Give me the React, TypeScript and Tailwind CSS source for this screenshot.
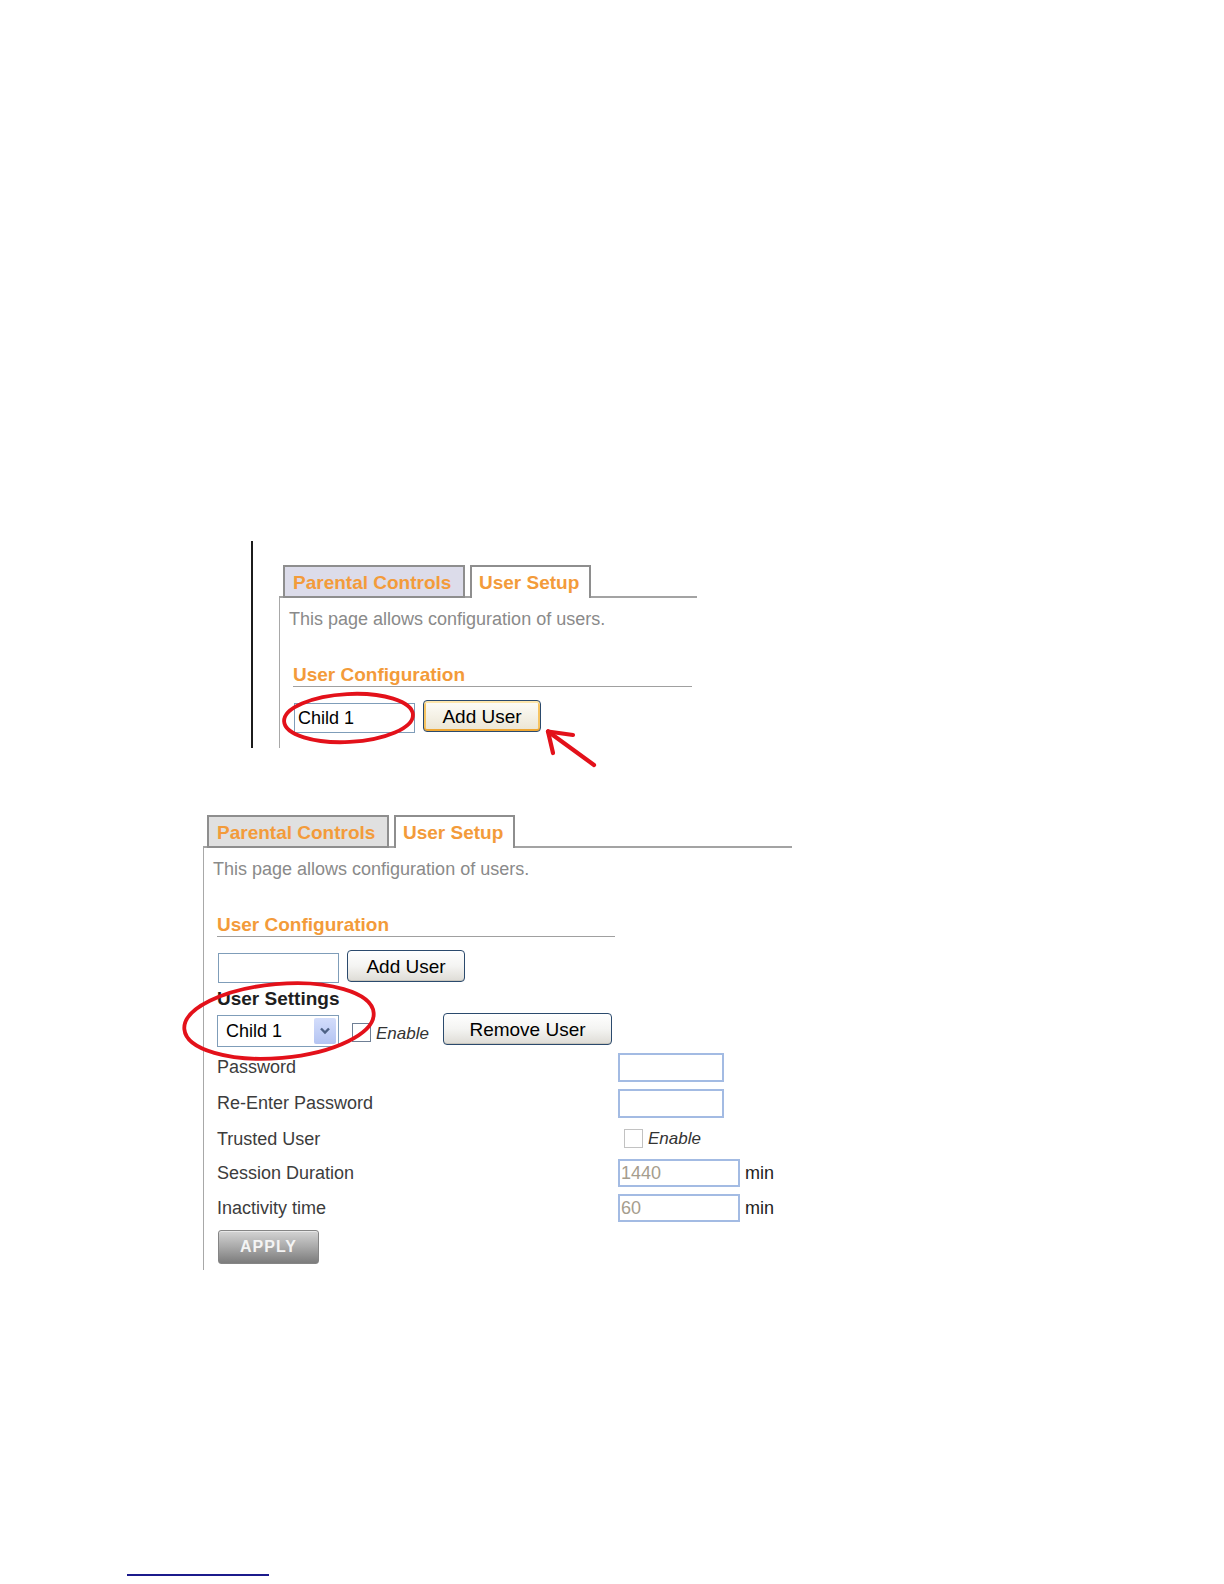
import React from "react";

// Manual page: two router screenshots (Parental Controls > User Setup) with red annotations

const ORANGE = "text-[#f39b3a]";

function TabBar({ widthClass, inactiveClass }: { widthClass: string; inactiveClass: string }) {
  return (
    <div className={`flex items-end ${widthClass}`}>
      <div className="w-[4px] border-b-2 border-[#a3a3a3]" />
      <div
        className={`w-[182px] h-[33px] border-2 border-[#8e8e8e] ${inactiveClass} pl-[8px] pt-[5px] text-[19px] font-bold leading-[22px] ${ORANGE} whitespace-nowrap`}
      >
        Parental Controls
      </div>
      <div className="w-[5px] border-b-2 border-[#a3a3a3]" />
      <div
        className={`w-[121px] h-[33px] border-2 border-b-0 border-[#8e8e8e] bg-white pl-[7px] pt-[5px] text-[19px] font-bold leading-[22px] ${ORANGE} whitespace-nowrap`}
      >
        User Setup
      </div>
      <div className="flex-1 border-b-2 border-[#a3a3a3]" />
    </div>
  );
}

function XpButton({ label, widthClass, hover }: { label: string; widthClass: string; hover?: boolean }) {
  return (
    <button
      className={`${widthClass} h-[32px] rounded-[4px] border border-[#2b4a6d] text-[19px] leading-none text-black ${
        hover
          ? "bg-gradient-to-b from-[#fefdf8] to-[#ebe5d3] shadow-[inset_0_2px_0_#fde6ac,inset_0_-2px_0_#eea733,inset_2px_0_0_#f6c462,inset_-2px_0_0_#f6c462]"
          : "bg-gradient-to-b from-[#ffffff] via-[#f4f4f2] to-[#dedcd6] shadow-[inset_0_-1px_0_#c9c6bd]"
      }`}
    >
      {label}
    </button>
  );
}

function Row({ label, children, h }: { label: string; children: React.ReactNode; h: string }) {
  return (
    <div className={`flex items-center ${h}`}>
      <div className="w-[401px] text-[18px] leading-[22px] text-[#3c3c3c]">{label}</div>
      {children}
    </div>
  );
}

export default function App() {
  return (
    <div className="relative w-[1224px] h-[1584px] overflow-hidden bg-white font-['Liberation_Sans',Arial,sans-serif]">
      {/* figure 1 */}
      <div className="flex items-start pt-[541px] pl-[251px]">
        <div className="w-[2px] h-[207px] bg-[#1c1c1c]" />
        <div className="ml-[26px] mt-[24px]">
          <TabBar widthClass="w-[418px]" inactiveClass="bg-[#dcdcea]" />
          <div className="border-l border-[#a8a8a8] pl-[9px] pt-[10px] pb-[15px]">
            <p className="text-[18px] leading-[22px] text-[#8a8a8a]">This page allows configuration of users.</p>
            <div className={`mt-[34px] ml-[4px] w-[399px] border-b border-[#a0a0a0] text-[19px] font-bold leading-[22px] ${ORANGE}`}>
              User Configuration
            </div>
            <div className="mt-[13px] ml-[5px] flex items-end gap-[8px]">
              <div className="w-[121px] h-[30px] border border-[#7f9db9] bg-white pl-[3px] text-[18px] leading-[28px] text-black">
                Child 1
              </div>
              <div className="mb-[1px]">
                <XpButton label="Add User" widthClass="w-[118px]" hover />
              </div>
            </div>
          </div>
        </div>
      </div>

      {/* figure 2 */}
      <div className="mt-[67px] pl-[203px]">
        <TabBar widthClass="w-[589px]" inactiveClass="bg-[#e0e0e0]" />
        <div className="border-l border-[#a8a8a8] pl-[9px] pt-[10px] pb-[6px]">
          <p className="text-[18px] leading-[22px] text-[#8a8a8a]">This page allows configuration of users.</p>
          <div className={`mt-[34px] ml-[4px] w-[398px] border-b border-[#a0a0a0] text-[19px] font-bold leading-[22px] ${ORANGE}`}>
            User Configuration
          </div>
          <div className="mt-[13px] ml-[5px] flex items-end gap-[8px]">
            <div className="w-[121px] h-[30px] border border-[#7f9db9] bg-white" />
            <div className="mb-[1px]">
              <XpButton label="Add User" widthClass="w-[118px]" />
            </div>
          </div>

          <div className="ml-[4px]">
            <div className="mt-[5px] text-[19px] font-bold leading-[22px] text-[#1e1e1e]">User Settings</div>
            <div className="mt-[3px] flex items-start h-[34px]">
              <div className="mt-[2px] w-[122px] h-[32px] border border-[#7f9db9] bg-white flex items-center justify-between pl-[8px] pr-[2px]">
                <span className="text-[18px] leading-[22px] text-black">Child 1</span>
                <span className="w-[22px] h-[26px] rounded-[2px] bg-gradient-to-b from-[#d3ddfb] to-[#b4c4f2] flex items-center justify-center">
                  <svg width="12" height="10" viewBox="0 0 12 10">
                    <path d="M2 2.5 L6 6.5 L10 2.5" fill="none" stroke="#4d6185" strokeWidth="2.4" />
                  </svg>
                </span>
              </div>
              <div className="ml-[13px] mt-[10px] w-[19px] h-[19px] border border-[#6f7f95] bg-white" />
              <div className="ml-[5px] mt-[10px] w-[67px] text-[17px] italic leading-[22px] text-[#333]">Enable</div>
              <XpButton label="Remove User" widthClass="w-[169px]" />
            </div>

            <div className="mt-[2px]">
              <Row label="Password" h="h-[36px]">
                <div className="w-[106px] h-[29px] border-2 border-[#a3bbe3] bg-white" />
              </Row>
              <Row label="Re-Enter Password" h="h-[36px]">
                <div className="w-[106px] h-[29px] border-2 border-[#a3bbe3] bg-white" />
              </Row>
              <Row label="Trusted User" h="h-[35px]">
                <div className="ml-[6px] w-[19px] h-[19px] border border-[#c2c2c2] bg-white" />
                <span className="ml-[5px] text-[17px] italic leading-[22px] text-[#333]">Enable</span>
              </Row>
              <Row label="Session Duration" h="h-[34px]">
                <div className="w-[122px] h-[28px] border-2 border-[#a3bbe3] bg-white pl-[1px] text-[18px] leading-[24px] text-[#a59d8d]">
                  1440
                </div>
                <span className="ml-[5px] text-[18px] leading-[22px] text-[#222]">min</span>
              </Row>
              <Row label="Inactivity time" h="h-[36px]">
                <div className="w-[122px] h-[28px] border-2 border-[#a3bbe3] bg-white pl-[1px] text-[18px] leading-[24px] text-[#a59d8d]">
                  60
                </div>
                <span className="ml-[5px] text-[18px] leading-[22px] text-[#222]">min</span>
              </Row>
            </div>

            <button className="mt-[4px] ml-[1px] w-[101px] h-[34px] rounded-[3px] border border-[#858585] bg-gradient-to-b from-[#d4d4d4] via-[#a9a9a9] to-[#7c7c7c] shadow-[inset_0_1px_0_#e8e8e8] text-[16px] font-bold tracking-[1px] text-[#f4f4f4]">
              APPLY
            </button>
          </div>
        </div>
      </div>

      {/* footnote rule */}
      <div className="mt-[304px] ml-[127px] w-[142px] h-[2px] bg-[#1b1a8c]" />

      {/* red hand-drawn annotations */}
      <svg className="absolute inset-0 pointer-events-none" width="1224" height="1584" viewBox="0 0 1224 1584">
        <g fill="none" stroke="#e3111a" strokeWidth="3.8" strokeLinecap="round" strokeLinejoin="round">
          <ellipse cx="348.5" cy="718" rx="64.5" ry="24" transform="rotate(-3 348.5 718)" />
          <ellipse cx="279" cy="1021" rx="95" ry="37" transform="rotate(-5 279 1021)" />
          <path d="M594 765 L548 731.5" strokeWidth="4.2" />
          <path d="M548 731.5 L573 735" strokeWidth="4.2" />
          <path d="M548 731.5 L553 753" strokeWidth="4.2" />
        </g>
      </svg>
    </div>
  );
}
